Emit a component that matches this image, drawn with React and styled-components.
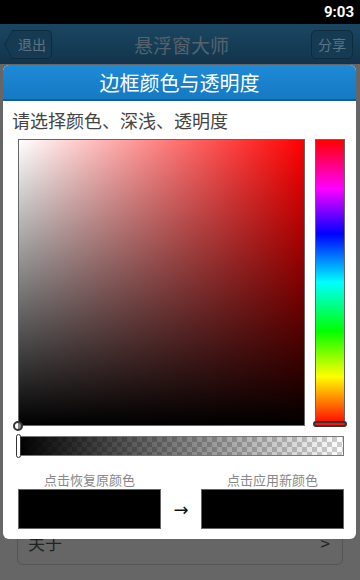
import styled, { createGlobalStyle } from 'styled-components';

const GlobalStyle = createGlobalStyle`
    body {
        margin: 0;
        font-family: "Noto Sans CJK SC", "Noto Sans", sans-serif;
    }
`;

const Screen = styled.div`
    position: relative;
    width: 360px;
    height: 580px;
    overflow: hidden;
    background: #666666;
`;

const StatusBar = styled.div`
    height: 24px;
    background: #000;
    display: flex;
    justify-content: flex-end;
    align-items: center;
    padding-right: 6px;
    color: #fff;
    font-family: Roboto, "Noto Sans", sans-serif;
    font-weight: bold;
    font-size: 15px;
`;

const AppBar = styled.div`
    height: 40px;
    display: flex;
    align-items: center;
    justify-content: space-between;
    padding: 0 7px 0 12px;
    background: linear-gradient(#1a4662, #12344b);
`;

const BarButton = styled.div`
    position: relative;
    box-sizing: border-box;
    height: 29px;
    padding: ${p => (p.$back ? '0 5px 0 6px' : '0 6px')};
    display: flex;
    align-items: center;
    font-size: 14px;
    color: #5f7483;
    background: #163a52;
    border: 1px solid #0e2a3d;
    border-left: ${p => (p.$back ? 'none' : '1px solid #0e2a3d')};
    border-radius: ${p => (p.$back ? '0 5px 5px 0' : '5px')};

    &::before {
        content: '';
        display: ${p => (p.$back ? 'block' : 'none')};
        position: absolute;
        left: -10px;
        top: 3px;
        width: 20px;
        height: 20px;
        transform: scaleX(0.55) rotate(45deg);
        background: #163a52;
        border-left: 1px solid #0e2a3d;
        border-bottom: 1px solid #0e2a3d;
        z-index: 0;
    }

    span {
        position: relative;
        z-index: 1;
    }
`;

const BarTitle = styled.div`
    font-size: 19px;
    color: #56636d;
`;

const Content = styled.div`
    padding: 455px 17px 0;
`;

const ListCard = styled.div`
    height: 44px;
    border: 1px solid #555;
    border-radius: 6px;
    display: flex;
    align-items: center;
    justify-content: space-between;
    padding: 0 12px 0 10px;
    font-size: 17px;
    color: #222;
`;

const Dialog = styled.div`
    position: absolute;
    top: 65px;
    left: 3px;
    width: 353px;
    background: #fff;
    border-radius: 6px;
    overflow: hidden;
`;

const DialogHeader = styled.div`
    height: 34px;
    display: flex;
    align-items: center;
    justify-content: center;
    background: linear-gradient(#1d8ad6, #1679c4);
    border-bottom: 2px solid #0f609c;
    color: #fff;
    font-size: 20px;
`;

const Prompt = styled.div`
    margin: 8px 0 0 9px;
    line-height: 22px;
    font-size: 18px;
    color: #444;
`;

const PickerRow = styled.div`
    display: flex;
    gap: 10px;
    margin: 8px 0 0 15px;
`;

const SatValBox = styled.div`
    position: relative;
    box-sizing: border-box;
    width: 287px;
    height: 287px;
    border: 1px solid #666;
    background:
        linear-gradient(to top, #000, rgba(0, 0, 0, 0)),
        linear-gradient(to right, #fff, #ff0000);
`;

const SatValCursor = styled.div`
    position: absolute;
    left: -6px;
    bottom: -6px;
    box-sizing: border-box;
    width: 10px;
    height: 10px;
    border-radius: 50%;
    border: 2px solid #333;
    background: linear-gradient(to right, #fff 50%, #888 50%);
`;

const HueBar = styled.div`
    position: relative;
    box-sizing: border-box;
    width: 30px;
    height: 287px;
    border: 1px solid #666;
    background: linear-gradient(
        to bottom,
        #ff0000 0%,
        #ff00ff 17%,
        #0000ff 33%,
        #00ffff 50%,
        #00ff00 67%,
        #ffff00 83%,
        #ff0000 100%
    );
`;

const HueCursor = styled.div`
    position: absolute;
    left: -3px;
    right: -3px;
    bottom: -2px;
    height: 6px;
    box-sizing: border-box;
    border: 2px solid #333;
    border-radius: 3px;
    background: #ff1010;
`;

const AlphaBar = styled.div`
    position: relative;
    box-sizing: border-box;
    width: 328px;
    height: 20px;
    margin: 10px 0 0 13px;
    border: 1px solid #777;
    background:
        linear-gradient(to right, #000, rgba(0, 0, 0, 0)),
        conic-gradient(#cfcfcf 25%, #fff 25% 50%, #cfcfcf 50% 75%, #fff 75%);
    background-size: 100% 100%, 10px 10px;
`;

const AlphaCursor = styled.div`
    position: absolute;
    left: -1px;
    top: -3px;
    box-sizing: border-box;
    width: 5px;
    height: 24px;
    border: 1.5px solid #333;
    border-radius: 3px;
    background: #fff;
`;

const SwatchGrid = styled.div`
    display: grid;
    grid-template-columns: 143px 40px 143px;
    grid-template-rows: 18px 40px;
    margin: 15px 0 10px 15px;
`;

const SwatchLabel = styled.div`
    font-size: 13px;
    line-height: 18px;
    color: #888;
    text-align: center;
    grid-column: ${p => p.$col};
`;

const Swatch = styled.div`
    box-sizing: border-box;
    border: 1px solid #666;
    background: ${p => p.$color};
    grid-column: ${p => p.$col};
    grid-row: 2;
`;

const Arrow = styled.div`
    grid-column: 2;
    grid-row: 2;
    display: flex;
    align-items: center;
    justify-content: center;
    font-size: 18px;
    color: #111;
    font-family: "DejaVu Sans", sans-serif;
`;

const App = () => {
    return (
        <Screen>
            <GlobalStyle />
            <StatusBar>9:03</StatusBar>
            <AppBar>
                <BarButton $back><span>退出</span></BarButton>
                <BarTitle>悬浮窗大师</BarTitle>
                <BarButton><span>分享</span></BarButton>
            </AppBar>
            <Content>
                <ListCard>
                    <span>关于</span>
                    <span>&gt;</span>
                </ListCard>
            </Content>

            <Dialog>
                <DialogHeader>边框颜色与透明度</DialogHeader>
                <Prompt>请选择颜色、深浅、透明度</Prompt>
                <PickerRow>
                    <SatValBox>
                        <SatValCursor />
                    </SatValBox>
                    <HueBar>
                        <HueCursor />
                    </HueBar>
                </PickerRow>
                <AlphaBar>
                    <AlphaCursor />
                </AlphaBar>
                <SwatchGrid>
                    <SwatchLabel $col={1}>点击恢复原颜色</SwatchLabel>
                    <SwatchLabel $col={3}>点击应用新颜色</SwatchLabel>
                    <Swatch $col={1} $color="#000" />
                    <Arrow>→</Arrow>
                    <Swatch $col={3} $color="#000" />
                </SwatchGrid>
            </Dialog>
        </Screen>
    );
};

export default App;
